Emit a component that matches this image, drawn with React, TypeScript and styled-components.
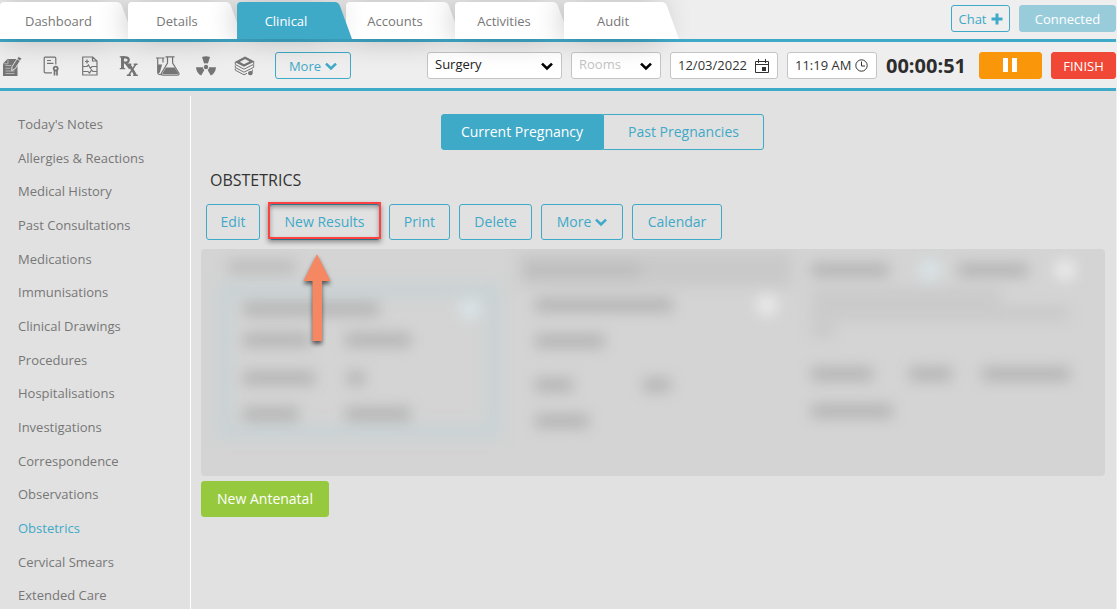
import React from 'react';
import styled, { createGlobalStyle } from 'styled-components';

const BLUE = '#3fa9c8';
const GREY = '#777';

const GlobalStyle = createGlobalStyle`
  *, *::before, *::after { box-sizing: border-box; }
  body {
    margin: 0;
    background: #e1e1e1;
    color: #333;
    font: 13px/20px "Open Sans", "Noto Sans", sans-serif;
  }
  button, input, select { font: inherit; color: inherit; margin: 0; }
  button { cursor: pointer; white-space: nowrap; }
`;

const Page = styled.div`
  display: flex;
  flex-direction: column;
  height: 100vh;
  overflow: hidden;
  border-right: 1px solid #efefef;
`;

/* ---------- header ---------- */

const TopBar = styled.header`
  display: flex;
  justify-content: space-between;
  flex: none;
  height: 42px;
  background: #eee;
  border-bottom: 3px solid ${BLUE};
`;

const TabList = styled.nav`
  display: flex;
  align-items: flex-end;
`;

const Tab = styled.a<{ $active?: boolean; $first?: boolean }>`
  position: relative;
  z-index: ${p => (p.$active ? 2 : 1)};
  width: ${p => (p.$first ? 128 : 109)}px;
  height: 37px;
  padding-right: 11px;
  line-height: 38px;
  text-align: center;
  text-decoration: none;
  color: ${p => (p.$active ? '#fff' : GREY)};

  &::before, &::after {
    content: "";
    position: absolute;
    z-index: -1;
    top: 0;
    bottom: 0;
    background: ${p => (p.$active ? BLUE : '#fff')};
  }
  &::before {
    left: 0;
    right: 12px;
    border-radius: 4px 4px 0 0;
    box-shadow: 0 0 30px rgba(0, 0, 0, 0.24);
  }
  &::after {
    right: -6px;
    width: 40px;
    border-radius: 0 4px 0 0;
    transform: skewX(20deg);
    transform-origin: right bottom;
  }
`;

const TopActions = styled.div`
  display: flex;
  gap: 9px;
  padding-top: 5px;
`;

const SmallButton = styled.button<{ $fill?: string; $width: number }>`
  display: flex;
  align-items: center;
  justify-content: center;
  gap: 4px;
  width: ${p => p.$width}px;
  height: 27px;
  padding: 0;
  border: 1px solid ${p => p.$fill ?? BLUE};
  border-radius: 3px;
  background: ${p => p.$fill ?? 'transparent'};
  color: ${p => (p.$fill ? '#fff' : BLUE)};
`;

const ToolBar = styled.div`
  display: flex;
  align-items: center;
  justify-content: space-between;
  flex: none;
  height: 49px;
  padding-top: 1px;
  background: #eee;
  border-bottom: 3px solid ${BLUE};
`;

const ToolGroup = styled.div`
  display: flex;
  align-items: center;
  gap: 9px;
`;

const IconRow = styled.div`
  display: flex;
  justify-content: space-between;
  width: 258px;
  margin-right: 8px;
`;

const IconButton = styled.button`
  display: flex;
  align-items: center;
  justify-content: center;
  width: 26px;
  height: 26px;
  padding: 0;
  border: 0;
  background: none;
  color: #757575;
`;

const Field = styled.label<{ $width: number }>`
  display: flex;
  align-items: center;
  width: ${p => p.$width}px;
  height: 27px;
  padding-right: 8px;
  border: 1px solid #c4c4c4;
  border-radius: 3px;
  background: #fff;
  color: #333;
`;

const TextInput = styled.input`
  flex: 1;
  min-width: 0;
  height: 25px;
  padding: 0 0 2px 7px;
  border: 0;
  background: none;
  outline: none;
`;

const Select = styled.select<{ $muted?: boolean }>`
  flex: 1;
  min-width: 0;
  height: 25px;
  padding: 0 0 3px 7px;
  border: 0;
  background: none;
  outline: none;
  appearance: none;
  color: ${p => (p.$muted ? '#c4c4c4' : '#222')};
`;

const Arrow = styled.span`
  display: flex;
  color: #000;
`;

const Timer = styled.time`
  width: 84px;
  font-size: 20px;
  font-weight: 700;
  line-height: 27px;
  color: #2d2d2d;
`;

/* ---------- body ---------- */

const Body = styled.div`
  display: flex;
  flex: 1;
  min-height: 0;
  padding-top: 5px;
`;

const Sidebar = styled.nav`
  flex: none;
  width: 191px;
  padding: 11px 0 0 18px;
  border-right: 1px solid #fff;
`;

const SideList = styled.ul`
  display: flex;
  flex-direction: column;
  height: 505px;
  margin: 0;
  padding: 0;
  list-style: none;
`;

const SideItem = styled.li`
  display: flex;
  align-items: center;
  flex: 1;
`;

const SideLink = styled.a<{ $active?: boolean }>`
  color: ${p => (p.$active ? BLUE : GREY)};
  text-decoration: none;
`;

const Main = styled.main`
  flex: 1;
  min-width: 0;
  padding: 18px 11px 0 10px;
`;

const Switcher = styled.div`
  display: flex;
  justify-content: center;
  padding-right: 101px;
`;

const SwitchButton = styled.button<{ $active?: boolean }>`
  width: ${p => (p.$active ? 162 : 161)}px;
  height: 36px;
  padding: 0;
  font-size: 14px;
  border: 1px solid ${BLUE};
  border-radius: ${p => (p.$active ? '3px 0 0 3px' : '0 3px 3px 0')};
  background: ${p => (p.$active ? BLUE : 'transparent')};
  color: ${p => (p.$active ? '#fff' : BLUE)};
`;

const Heading = styled.h1`
  margin: 18px 0 12px 9px;
  font-size: 16px;
  font-weight: 400;
  line-height: 24px;
`;

const Actions = styled.div`
  display: flex;
  gap: 9px;
  padding-left: 5px;
`;

const Action = styled.button<{ $fill?: string; $width: number }>`
  display: flex;
  align-items: center;
  justify-content: center;
  gap: 4px;
  width: ${p => p.$width}px;
  height: 36px;
  padding: 0;
  font-size: 14px;
  border: 1px solid ${p => p.$fill ?? BLUE};
  border-radius: 3px;
  background: ${p => p.$fill ?? 'transparent'};
  color: ${p => (p.$fill ? '#fff' : BLUE)};
`;

const Callout = styled.div`
  position: relative;
`;

const CalloutBox = styled.div`
  position: absolute;
  inset: -2px -1px 1px;
  border: 2px solid #ff4040;
  box-shadow: 0 3px 5px rgba(0, 0, 0, 0.4), inset 0 3px 5px rgba(0, 0, 0, 0.35);
  pointer-events: none;
`;

const CalloutArrow = styled.svg`
  position: absolute;
  z-index: 3;
  top: 50px;
  left: 32px;
  filter: drop-shadow(0 3px 2px rgba(0, 0, 0, 0.6));
`;

const Panel = styled.section`
  display: grid;
  grid-template-columns: 306fr 293fr 294fr;
  height: 227px;
  margin: 9px 0 5px;
  padding: 3px 0 0 11px;
  overflow: hidden;
  border-radius: 4px;
  background: #d4d4d4;
`;

const Column = styled.div`
  display: flex;
  flex-direction: column;
  min-width: 0;
  filter: blur(7px);
`;

const Frame = styled.div`
  flex: none;
  width: 286px;
  height: 158px;
  margin-left: 4px;
  padding-left: 11px;
  border: 16px solid #cad2d4;
`;

const Strip = styled.div`
  height: 35px;
  margin-right: 19px;
  padding-left: 6px;
  background: #c9c9c9;
`;

const Line = styled.div<{ $height?: number; $indent?: number }>`
  display: flex;
  align-items: center;
  flex: none;
  height: ${p => p.$height ?? 36}px;
  padding-left: ${p => p.$indent ?? 0}px;
`;

const Mark = styled.span<{ $width: number; $gap?: number; $tone?: 'faint' | 'soft' }>`
  flex: none;
  width: ${p => p.$width}px;
  height: 14px;
  margin-right: ${p => p.$gap ?? 0}px;
  border-radius: 3px;
  background: ${p => (p.$tone === 'faint' ? '#c9c9c9' : p.$tone === 'soft' ? '#bdbdbd' : '#b5b5b5')};
`;

const Knob = styled.span<{ $tint?: boolean; $gap?: number }>`
  flex: none;
  width: 22px;
  height: 22px;
  margin-right: ${p => p.$gap ?? 0}px;
  border-radius: 50%;
  background: ${p => (p.$tint ? '#d9e3e6' : '#e9e9e9')};
`;

/* ---------- icons ---------- */

const Chevron = () => (
  <svg width="12" height="12" viewBox="0 0 12 12" fill="none" stroke="currentColor" strokeWidth="2.6">
    <path d="M1 3.6 6 8.4l5-4.8" />
  </svg>
);

const NotesIcon = () => (
  <svg width="20" height="20" viewBox="0 0 20 20">
    <path fill="currentColor" d="M4.500 3h10L14.500 20H0V7.500z" />
    <path stroke="#c4c4c4" strokeWidth=".8" d="M2.500 9.500h6M2.500 12.300h5M2.500 15h9M2.500 17.500h9M5 3.500v4.300H.5" fill="none" />
    <path fill="currentColor" stroke="#eee" strokeWidth=".9" d="m15.500.4 3.400 1.900-6.700 10.400-3.500 2 .3-4z" />
    <path stroke="#eee" strokeWidth=".7" d="m13.700 2.800 3.600 2" />
  </svg>
);

const CertificateIcon = () => (
  <svg width="20" height="20" viewBox="0 0 20 20" fill="none" stroke="currentColor" strokeWidth="1.200">
    <path d="M10 16.800H3.200a1 1 0 0 1-1-1V2.200a1 1 0 0 1 1-1h9.600a1 1 0 0 1 1 1v6.300M5 4.500h4M5 7.300h6.500" />
    <circle cx="13.700" cy="12.600" r="2" strokeWidth="1.800" />
    <path d="M12.500 15v4.500M15 15v4.500" strokeWidth="1.700" />
  </svg>
);

const ChartIcon = () => (
  <svg width="20" height="20" viewBox="0 0 20 20" fill="none" stroke="currentColor" strokeWidth="1.200">
    <path d="M2.700 1h10L17 5v14H2.700zM12.500 1v4H17M5 5.500h4M7 3.500v4M3 10.500h4l1.500-1.500 2 3.500 1.500-2h5M3 15.500h5l1.500 1.500 2-3 1.500 1.500h4" />
  </svg>
);

const RxIcon = () => (
  <svg width="20" height="22" viewBox="0 0 20 22" fill="none" stroke="currentColor">
    <path strokeWidth="3" d="M3.500 1.500v12" />
    <path strokeWidth="2.200" d="M3.500 2.300h3c4.300 0 4.300 5.200 0 5.200h-2M6.500 7.500l4.500 6" />
    <path strokeWidth="1.300" d="M.8 1.800h5M.8 13.600h5.400" />
    <path strokeWidth="2.600" d="m10.200 9.500 6.300 10.500" />
    <path strokeWidth="1.500" d="m16.600 9.500-6.800 10.500M7.800 20.300h4.200M14.200 20.300h4.600M8.500 9.300h3.800M14.700 9.300h3.800" />
  </svg>
);

const FlaskIcon = () => (
  <svg width="26" height="20" viewBox="0 0 26 20" fill="none" stroke="currentColor" strokeWidth="1.200">
    <path d="M1 2h8.500M2.700 2v14.500c0 2.500 3.500 2.500 4 1M8 2v4.500" />
    <path fill="currentColor" stroke="none" d="M3 8.500h4.200L4.800 16.500 3 17.500z" />
    <path d="M10.500.8h9M12.500 1v6L6.600 17c-.6 1.200 0 2.200 1 2.200h15c1.200 0 1.800-1 1.200-2.200L17.600 7V1" />
    <path fill="currentColor" stroke="none" d="M11 11.500h8.400l3.600 5.300c.4.800 0 1.300-.6 1.300H8.300c-.7 0-1-.6-.7-1.200z" />
  </svg>
);

const RadiationIcon = () => (
  <svg width="22" height="20" viewBox="0 0 22 20" fill="currentColor">
    <circle cx="11" cy="11" r="2.200" />
    <path d="M7 .9Q11-.6 15 .9L12.900 7.600Q11 6.800 9.100 7.600z" />
    <path d="M1 11.200h6.900q.1 1.800 1.500 2.900L6.200 19.600Q1.400 17 1 11.200z" />
    <path d="M21 11.200h-6.900q-.1 1.800-1.500 2.900l3.200 5.500q4.800-2.600 5.200-8.400z" />
  </svg>
);

const StackIcon = () => (
  <svg width="22" height="20" viewBox="0 0 22 20" fill="none" stroke="currentColor">
    <path strokeWidth="2.400" d="m11 1.800 7 3.700-8 4-6.800-3.600z" />
    <path strokeWidth="1" d="M1.300 6v2.500l8.700 4.700 9.700-4.900V6M1.300 9.500v2l8.700 4.700 9.700-4.900V9M1.300 12.500v1.700L10 18.800l3-1.500" />
    <path fill="currentColor" stroke="none" d="M19 12.500q-.3 2-.3 4.500c0 3-4.700 3-4.700.3 0-2 2-2.500 3.500-2z" />
  </svg>
);

const CalendarIcon = () => (
  <svg width="14" height="14" viewBox="0 0 14 14" fill="none" stroke="currentColor">
    <path d="M.5 2.500h13v11H.5zM.5 5.500h13M3.500 0v4M10.500 0v4" />
    <path fill="currentColor" stroke="none" d="M7 8h4v4H7z" />
  </svg>
);

const ClockIcon = () => (
  <svg width="13" height="13" viewBox="0 0 13 13" fill="none" stroke="currentColor">
    <circle cx="6.500" cy="6.500" r="5.700" />
    <path d="M6.500 2.500v4.500H10" />
  </svg>
);

const PlusIcon = () => (
  <svg width="12" height="12" viewBox="0 0 12 12" stroke="currentColor" strokeWidth="3">
    <path d="M6 .5v11M.5 6h11" />
  </svg>
);

const PauseIcon = () => (
  <svg width="16" height="18" viewBox="0 0 16 18" fill="currentColor">
    <path d="M0 1h5v14H0zM9 1h5v14H9z" />
  </svg>
);

/* ---------- data ---------- */

const tabs = ['Dashboard', 'Details', 'Clinical', 'Accounts', 'Activities', 'Audit'];

const tools = [
  { label: 'Notes', Icon: NotesIcon },
  { label: 'Certificate', Icon: CertificateIcon },
  { label: 'Chart', Icon: ChartIcon },
  { label: 'Prescription', Icon: RxIcon },
  { label: 'Laboratory', Icon: FlaskIcon },
  { label: 'Radiology', Icon: RadiationIcon },
  { label: 'Records', Icon: StackIcon },
];

const sections = [
  "Today's Notes", 'Allergies & Reactions', 'Medical History', 'Past Consultations',
  'Medications', 'Immunisations', 'Clinical Drawings', 'Procedures', 'Hospitalisations',
  'Investigations', 'Correspondence', 'Observations', 'Obstetrics', 'Cervical Smears',
  'Extended Care',
];

export default function App() {
  return (
    <Page>
      <GlobalStyle />
      <TopBar>
        <TabList aria-label="Patient">
          {tabs.map((t, i) => (
            <Tab key={t} href="#" $first={i === 0} $active={t === 'Clinical'}>{t}</Tab>
          ))}
        </TabList>
        <TopActions>
          <SmallButton $width={59}>Chat <PlusIcon /></SmallButton>
          <SmallButton $width={97} $fill="#99ccdb">Connected</SmallButton>
        </TopActions>
      </TopBar>

      <ToolBar>
        <ToolGroup>
          <IconRow>
            {tools.map(({ label, Icon }) => (
              <IconButton key={label} aria-label={label}><Icon /></IconButton>
            ))}
          </IconRow>
          <SmallButton $width={76}>More <Chevron /></SmallButton>
        </ToolGroup>
        <ToolGroup>
          <Field $width={135}>
            <Select aria-label="Location" defaultValue="Surgery"><option>Surgery</option></Select>
            <Arrow><Chevron /></Arrow>
          </Field>
          <Field $width={90}>
            <Select aria-label="Room" $muted defaultValue="Rooms"><option>Rooms</option></Select>
            <Arrow><Chevron /></Arrow>
          </Field>
          <Field $width={108}>
            <TextInput aria-label="Date" defaultValue="12/03/2022" />
            <CalendarIcon />
          </Field>
          <Field $width={90}>
            <TextInput aria-label="Time" defaultValue="11:19 AM" />
            <ClockIcon />
          </Field>
          <Timer>00:00:51</Timer>
          <SmallButton $width={63} $fill="#fa960a" aria-label="Pause"><PauseIcon /></SmallButton>
          <SmallButton $width={65} $fill="#f04737">FINISH</SmallButton>
        </ToolGroup>
      </ToolBar>

      <Body>
        <Sidebar aria-label="Clinical sections">
          <SideList>
            {sections.map(s => (
              <SideItem key={s}>
                <SideLink href="#" $active={s === 'Obstetrics'}>{s}</SideLink>
              </SideItem>
            ))}
          </SideList>
        </Sidebar>

        <Main>
          <Switcher>
            <SwitchButton $active>Current Pregnancy</SwitchButton>
            <SwitchButton>Past Pregnancies</SwitchButton>
          </Switcher>
          <Heading>OBSTETRICS</Heading>
          <Actions>
            <Action $width={54}>Edit</Action>
            <Callout>
              <Action $width={111}>New Results</Action>
              <CalloutBox />
              <CalloutArrow width="32" height="90" viewBox="0 0 32 90" aria-hidden="true">
                <path fill="#f58862" d="M16 0 29.500 27H21v60h-9.500V27H2.500z" />
              </CalloutArrow>
            </Callout>
            <Action $width={61}>Print</Action>
            <Action $width={73}>Delete</Action>
            <Action $width={82}>More <Chevron /></Action>
            <Action $width={90}>Calendar</Action>
          </Actions>

          <Panel aria-label="Pregnancy details">
            <Column>
              <Line $height={30} $indent={16}><Mark $tone="soft" $width={68} /></Line>
              <Frame>
                <Line $height={22}><Mark $width={136} $gap={80} /><Knob $tint /></Line>
                <Line $height={40}><Mark $width={68} $gap={34} /><Mark $width={66} /></Line>
                <Line><Mark $width={72} $gap={32} /><Mark $width={18} /></Line>
                <Line><Mark $width={56} $gap={46} /><Mark $width={66} /></Line>
              </Frame>
            </Column>
            <Column>
              <Strip><Line $height={35}><Mark $tone="soft" $width={116} /></Line></Strip>
              <Line $indent={17}><Mark $width={138} $gap={83} /><Knob /></Line>
              <Line $indent={17}><Mark $width={70} /></Line>
              <Line $height={52} $indent={17}><Mark $width={38} $gap={70} /><Mark $width={28} /></Line>
              <Line $height={20} $indent={17}><Mark $width={54} /></Line>
            </Column>
            <Column>
              <Line $height={35}><Mark $width={78} $gap={30} /><Knob $tint $gap={17} /><Mark $width={70} $gap={26} /><Knob /></Line>
              <Line $height={17}><Mark $tone="faint" $width={190} /></Line>
              <Line $height={17}><Mark $tone="faint" $width={258} /></Line>
              <Line $height={17}><Mark $tone="faint" $width={24} /></Line>
              <Line $height={72}><Mark $width={62} $gap={36} /><Mark $width={43} $gap={30} /><Mark $width={88} /></Line>
              <Line $height={2}><Mark $width={82} /></Line>
            </Column>
          </Panel>

          <Action $width={128} $fill="#97c93f">New Antenatal</Action>
        </Main>
      </Body>
    </Page>
  );
}
